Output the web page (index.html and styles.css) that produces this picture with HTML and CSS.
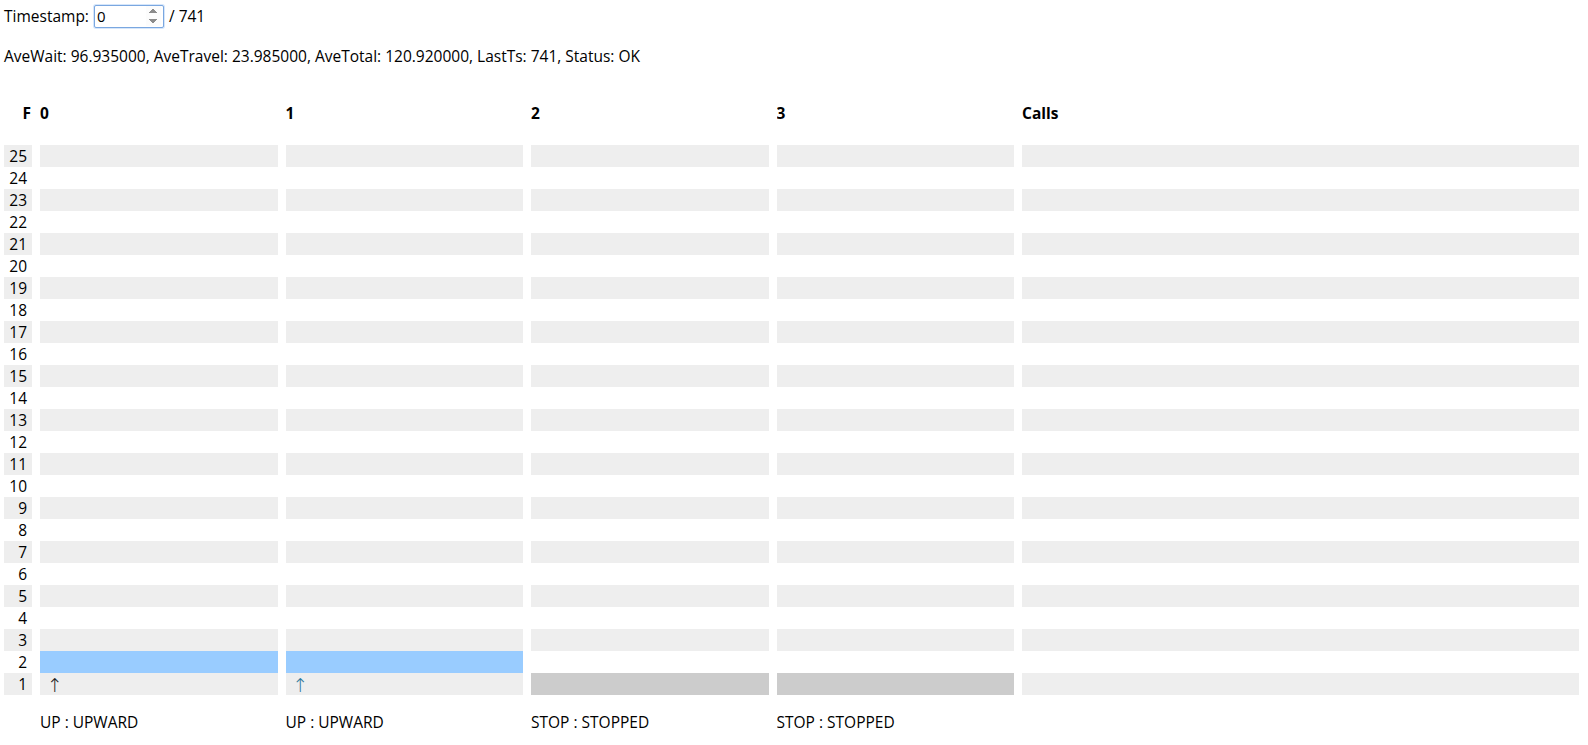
FILE: index.html
```html
<!DOCTYPE html>
<html>
<head>
<meta charset="utf-8">
<link rel="stylesheet" href="styles.css">
</head>
<body>
<div class="controls">
  <label class="ts-label" for="ts">Timestamp:</label>
  <input id="ts" class="ts-input" type="number" value="0" min="0" max="741">
  <span class="ts-total">/ 741</span>
</div>
<p class="stats">AveWait: 96.935000, AveTravel: 23.985000, AveTotal: 120.920000, LastTs: 741, Status: OK</p>

<div class="board">
  <div class="row head"><div class="cell floor">F</div><div class="cell">0</div><div class="cell">1</div><div class="cell">2</div><div class="cell">3</div><div class="cell">Calls</div></div>
  <div class="row odd"><div class="cell floor">25</div><div class="cell"></div><div class="cell"></div><div class="cell"></div><div class="cell"></div><div class="cell"></div></div>
  <div class="row"><div class="cell floor">24</div><div class="cell"></div><div class="cell"></div><div class="cell"></div><div class="cell"></div><div class="cell"></div></div>
  <div class="row odd"><div class="cell floor">23</div><div class="cell"></div><div class="cell"></div><div class="cell"></div><div class="cell"></div><div class="cell"></div></div>
  <div class="row"><div class="cell floor">22</div><div class="cell"></div><div class="cell"></div><div class="cell"></div><div class="cell"></div><div class="cell"></div></div>
  <div class="row odd"><div class="cell floor">21</div><div class="cell"></div><div class="cell"></div><div class="cell"></div><div class="cell"></div><div class="cell"></div></div>
  <div class="row"><div class="cell floor">20</div><div class="cell"></div><div class="cell"></div><div class="cell"></div><div class="cell"></div><div class="cell"></div></div>
  <div class="row odd"><div class="cell floor">19</div><div class="cell"></div><div class="cell"></div><div class="cell"></div><div class="cell"></div><div class="cell"></div></div>
  <div class="row"><div class="cell floor">18</div><div class="cell"></div><div class="cell"></div><div class="cell"></div><div class="cell"></div><div class="cell"></div></div>
  <div class="row odd"><div class="cell floor">17</div><div class="cell"></div><div class="cell"></div><div class="cell"></div><div class="cell"></div><div class="cell"></div></div>
  <div class="row"><div class="cell floor">16</div><div class="cell"></div><div class="cell"></div><div class="cell"></div><div class="cell"></div><div class="cell"></div></div>
  <div class="row odd"><div class="cell floor">15</div><div class="cell"></div><div class="cell"></div><div class="cell"></div><div class="cell"></div><div class="cell"></div></div>
  <div class="row"><div class="cell floor">14</div><div class="cell"></div><div class="cell"></div><div class="cell"></div><div class="cell"></div><div class="cell"></div></div>
  <div class="row odd"><div class="cell floor">13</div><div class="cell"></div><div class="cell"></div><div class="cell"></div><div class="cell"></div><div class="cell"></div></div>
  <div class="row"><div class="cell floor">12</div><div class="cell"></div><div class="cell"></div><div class="cell"></div><div class="cell"></div><div class="cell"></div></div>
  <div class="row odd"><div class="cell floor">11</div><div class="cell"></div><div class="cell"></div><div class="cell"></div><div class="cell"></div><div class="cell"></div></div>
  <div class="row"><div class="cell floor">10</div><div class="cell"></div><div class="cell"></div><div class="cell"></div><div class="cell"></div><div class="cell"></div></div>
  <div class="row odd"><div class="cell floor">9</div><div class="cell"></div><div class="cell"></div><div class="cell"></div><div class="cell"></div><div class="cell"></div></div>
  <div class="row"><div class="cell floor">8</div><div class="cell"></div><div class="cell"></div><div class="cell"></div><div class="cell"></div><div class="cell"></div></div>
  <div class="row odd"><div class="cell floor">7</div><div class="cell"></div><div class="cell"></div><div class="cell"></div><div class="cell"></div><div class="cell"></div></div>
  <div class="row"><div class="cell floor">6</div><div class="cell"></div><div class="cell"></div><div class="cell"></div><div class="cell"></div><div class="cell"></div></div>
  <div class="row odd"><div class="cell floor">5</div><div class="cell"></div><div class="cell"></div><div class="cell"></div><div class="cell"></div><div class="cell"></div></div>
  <div class="row"><div class="cell floor">4</div><div class="cell"></div><div class="cell"></div><div class="cell"></div><div class="cell"></div><div class="cell"></div></div>
  <div class="row odd"><div class="cell floor">3</div><div class="cell"></div><div class="cell"></div><div class="cell"></div><div class="cell"></div><div class="cell"></div></div>
  <div class="row"><div class="cell floor">2</div><div class="cell car-up"></div><div class="cell car-up"></div><div class="cell"></div><div class="cell"></div><div class="cell"></div></div>
  <div class="row odd"><div class="cell floor">1</div><div class="cell dir">↑</div><div class="cell dir dir-alt">↑</div><div class="cell car-stop"></div><div class="cell car-stop"></div><div class="cell"></div></div>
  <div class="row status"><div class="cell floor"></div><div class="cell">UP : UPWARD</div><div class="cell">UP : UPWARD</div><div class="cell">STOP : STOPPED</div><div class="cell">STOP : STOPPED</div><div class="cell"></div></div>
</div>
</body>
</html>
```

FILE: styles.css
```css
html, body {
  margin: 0;
  background: #ffffff;
}
body {
  padding: 4px 9px 0 4px;
  font-family: "Open Sans", "Noto Sans", sans-serif;
  font-size: 15.5px;
  color: #000000;
}
.controls {
  display: flex;
  align-items: center;
  height: 24px;
  gap: 5px;
}
.ts-input {
  box-sizing: border-box;
  width: 70px;
  height: 23px;
  margin: 0;
  padding: 0 2px;
  border: 1px solid #7aa7e0;
  border-radius: 2px;
  font-family: inherit;
  font-size: 15px;
  outline: none;
  box-shadow: 0 0 0 1px #d6e6fa;
}
.ts-input::-webkit-inner-spin-button {
  opacity: 1;
}
.stats {
  margin: 18px 0 0 0;
  line-height: 20px;
}
.board {
  margin-top: 36px;
}
.row {
  display: grid;
  grid-template-columns: 28px repeat(4, 237.5px) 1fr;
  column-gap: 8px;
  height: 22px;
}
.cell {
  line-height: 22px;
  overflow: hidden;
  white-space: nowrap;
}
.floor {
  text-align: right;
  padding-right: 5px;
}
.odd .cell {
  background: #eeeeee;
}
.head {
  font-weight: bold;
  margin-bottom: 21px;
}
.head .floor {
  padding-right: 1px;
}
.car-up {
  background: #99ccff;
}
.odd .car-stop {
  background: #cccccc;
}
.dir {
  padding-left: 7px;
  font-family: "DejaVu Sans", sans-serif;
  font-weight: 200;
  font-size: 19px;
  line-height: 24px;
  color: #222222;
}
.dir-alt {
  color: #2f7a9e;
}
.status {
  margin-top: 16px;
}
```
